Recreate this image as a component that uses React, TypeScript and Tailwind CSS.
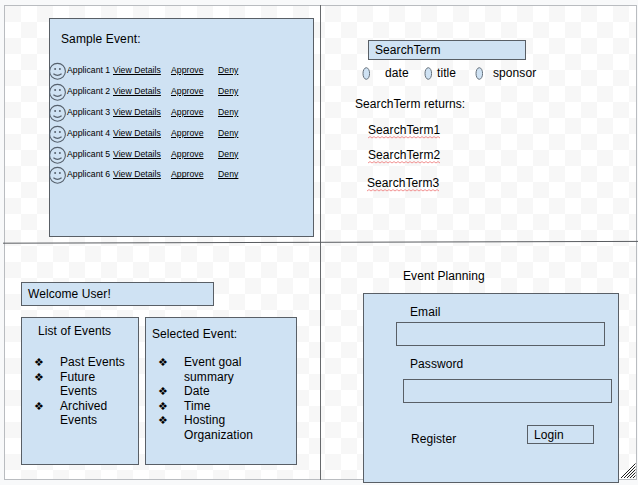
import type { ReactNode } from "react";

const applicants = [1, 2, 3, 4, 5, 6];
const box = "border border-[#595f66] bg-[#cfe2f3]";

function Smiley() {
  return (
    <svg width="18" height="18" viewBox="0 0 18 18" fill="none" stroke="#56616d" strokeWidth="1.1" className="shrink-0">
      <circle cx="8.5" cy="9.3" r="7.9" />
      <circle cx="6.1" cy="6.9" r="1" fill="#56616d" stroke="none" />
      <circle cx="10.9" cy="6.9" r="1" fill="#56616d" stroke="none" />
      <path d="M4.4 11.8Q8.5 14.9 12.6 11.8" />
    </svg>
  );
}

function ApplicantPanel() {
  return (
    <section className="pt-3 pl-11">
      <div className={`h-[219px] w-[265px] ${box}`}>
        <h1 className="pt-[13px] pl-[11px] tracking-[0.12px]">Sample Event:</h1>
        <ul className="mt-[16px] -ml-px text-[8.7px] leading-[10px] tracking-[0.02px]">
          {applicants.map((n) => (
            <li key={n} className="flex h-[20.9px] items-start">
              <Smiley />
              <span className="mt-[3px] w-[46px]">Applicant {n}</span>
              <span className="mt-[3px] w-[58px] underline">View Details</span>
              <span className="mt-[3px] w-[47px] underline">Approve</span>
              <span className="mt-[3px] underline">Deny</span>
            </li>
          ))}
        </ul>
      </div>
    </section>
  );
}

function Radio({ label, className, gap }: { label: string; className: string; gap: string }) {
  return (
    <div className={`flex items-center ${className} ${gap}`}>
      <svg width="8" height="13" viewBox="0 0 8 13" className="shrink-0">
        <ellipse cx="4.3" cy="6.5" rx="3.3" ry="5.8" fill="#cfe2f3" stroke="#66717c" />
      </svg>
      <span>{label}</span>
    </div>
  );
}

function Misspelt({ children }: { children: ReactNode }) {
  return (
    <div className="w-[73px]">
      {children}
      <svg width="73" height="3" className="-mt-px block" fill="none" stroke="#f08585" strokeWidth="0.9">
        <path d={"M0 2" + Array.from({ length: 18 }, () => "l2 -1.4l2 1.4").join("")} />
      </svg>
    </div>
  );
}

function SearchPanel() {
  return (
    <section className="pt-[34px] pl-[35px]">
      <div className={`ml-[13px] h-[20px] w-[158px] pt-[2px] pl-[6px] ${box}`}>SearchTerm</div>
      <div className="mt-[6px] ml-[7px] flex h-[14px]">
        <Radio label="date" className="w-[62px]" gap="gap-[15px]" />
        <Radio label="title" className="w-[51px]" gap="gap-[5px]" />
        <Radio label="sponsor" className="" gap="gap-[10px]" />
      </div>
      <p className="mt-[17px]">SearchTerm returns:</p>
      <div className="mt-[12px] ml-[13px]">
        <Misspelt>SearchTerm1</Misspelt>
      </div>
      <div className="mt-[9px] ml-[13px]">
        <Misspelt>SearchTerm2</Misspelt>
      </div>
      <div className="mt-[12px] ml-[12px]">
        <Misspelt>SearchTerm3</Misspelt>
      </div>
    </section>
  );
}

function Bullets({ items, className }: { items: string[]; className: string }) {
  return (
    <ul className={`leading-[14.6px] ${className}`}>
      {items.map((item) => (
        <li key={item} className="flex">
          <span className="mt-px -mb-px h-[14.6px] w-[26px] shrink-0 font-['DejaVu_Sans'] text-[11px]">❖</span>
          <span className="whitespace-pre">{item}</span>
        </li>
      ))}
    </ul>
  );
}

function EventsPanel() {
  return (
    <section className="pt-[39px] pl-4">
      <div className={`h-[24px] w-[193px] pt-[4px] pl-[6px] ${box}`}>Welcome User!</div>
      <div className="mt-[11px] flex gap-[6px]">
        <div className={`h-[148px] w-[118px] ${box}`}>
          <h2 className="pt-[6px] pl-[16px]">List of Events</h2>
          <Bullets className="mt-[17px] ml-[12px]" items={["Past Events", "Future\nEvents", "Archived\nEvents"]} />
        </div>
        <div className={`h-[148px] w-[152px] ${box}`}>
          <h2 className="pt-[9px] pl-[6px]">Selected Event:</h2>
          <Bullets
            className="mt-[14px] ml-[12px]"
            items={["Event goal\nsummary", "Date", "Time", "Hosting\nOrganization"]}
          />
        </div>
      </div>
    </section>
  );
}

function LoginPanel() {
  return (
    <section className="pt-[26px] pl-[43px]">
      <h2 className="pl-[40px]">Event Planning</h2>
      <div className={`mt-[10px] h-[190px] w-[256px] ${box}`}>
        <p className="pt-[11px] pl-[46px]">Email</p>
        <div className="mt-[3px] ml-[32px] h-[24px] w-[209px] border border-[#595f66]" />
        <p className="mt-[11px] pl-[46px]">Password</p>
        <div className="mt-[8px] ml-[39px] h-[24px] w-[209px] border border-[#595f66]" />
        <div className="mt-[22px] flex">
          <p className="ml-[47px] w-[116px] shrink-0 pt-[7px]">Register</p>
          <div className="h-[19px] w-[67px] border border-[#595f66] pt-[2px] pl-[6px]">Login</div>
        </div>
      </div>
    </section>
  );
}

export default function App() {
  return (
    <main className="relative h-[485px] w-[638px] overflow-hidden bg-[#f8f9fa] pt-[5px] pl-1 font-['Liberation_Sans',Arial,sans-serif] text-[12px] leading-[14px] tracking-[0.08px] whitespace-nowrap text-black">
      <div className="grid h-[475px] w-[633px] grid-cols-[315px_316px] grid-rows-[237px_236px] border border-[#b9bcc0] bg-[conic-gradient(#ffffff_25%,#f7f7f7_0_50%,#ffffff_0_75%,#f7f7f7_0)] bg-[length:32px_32px]">
        <ApplicantPanel />
        <SearchPanel />
        <EventsPanel />
        <LoginPanel />
      </div>
      <svg width="638" height="485" className="pointer-events-none absolute inset-0" fill="none">
        <path d="M320.5 5V480" stroke="#66696c" />
        <path d="M3 243.2L638 241.4" stroke="#595c60" />
        <path d="M621 478L635.5 463.5M624 478L635.5 466.5M627 478L635.5 469.5M630 478L635.5 472.5M633 478L635.5 475.5" stroke="#222222" />
      </svg>
    </main>
  );
}
